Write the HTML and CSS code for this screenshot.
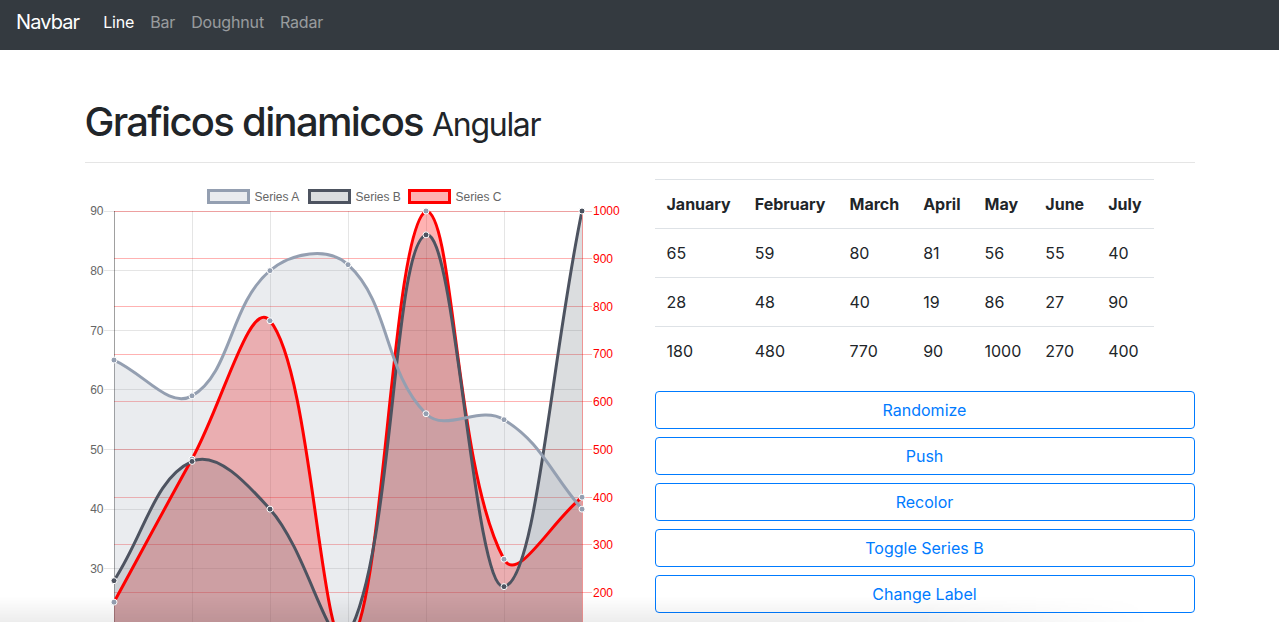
FILE: index.html
```html
<!DOCTYPE html>
<html lang="en">
<head>
<meta charset="utf-8">
<title>Graficos dinamicos</title>
<link rel="stylesheet" href="styles.css">
</head>
<body>
<nav class="navbar">
  <a class="navbar-brand" href="#">Navbar</a>
  <ul class="nav">
    <li><a class="nav-link active" href="#">Line</a></li>
    <li><a class="nav-link" href="#">Bar</a></li>
    <li><a class="nav-link" href="#">Doughnut</a></li>
    <li><a class="nav-link" href="#">Radar</a></li>
  </ul>
</nav>

<main class="container">
  <header class="page-header">
    <h1>Graficos dinamicos <small>Angular</small></h1>
  </header>

  <div class="row">
    <div class="col">
      <svg class="chart" id="line-chart" width="540" height="540" viewBox="0 0 540 540">
        <defs>
          <clipPath id="clip-area"><rect x="29" y="31" width="468" height="477"></rect></clipPath>
          <clipPath id="clip-line"><rect x="29" y="29.5" width="468" height="480"></rect></clipPath>
        </defs>
        <g id="chart-grid"></g>
        <g class="ticks-left">
          <text x="18.5" y="35.3">90</text>
          <text x="18.5" y="94.9">80</text>
          <text x="18.5" y="154.6">70</text>
          <text x="18.5" y="214.2">60</text>
          <text x="18.5" y="273.8">50</text>
          <text x="18.5" y="333.4">40</text>
          <text x="18.5" y="393.1">30</text>
          <text x="18.5" y="452.7">20</text>
          <text x="18.5" y="512.3">10</text>
        </g>
        <g class="ticks-right">
          <text x="508" y="35.3">1000</text>
          <text x="508" y="83">900</text>
          <text x="508" y="130.7">800</text>
          <text x="508" y="178.4">700</text>
          <text x="508" y="226.1">600</text>
          <text x="508" y="273.8">500</text>
          <text x="508" y="321.5">400</text>
          <text x="508" y="369.2">300</text>
          <text x="508" y="416.9">200</text>
          <text x="508" y="464.6">100</text>
          <text x="508" y="512.3">0</text>
        </g>
        <g class="ticks-bottom">
          <text x="29" y="532">January</text>
          <text x="107" y="532">February</text>
          <text x="185" y="532">March</text>
          <text x="263" y="532">April</text>
          <text x="341" y="532">May</text>
          <text x="419" y="532">June</text>
          <text x="497" y="532">July</text>
        </g>
        <g id="chart-fills"></g>
        <g id="chart-series"></g>
        <g class="legend">
          <rect class="legend-a" x="123.5" y="10.5" width="40" height="12"></rect>
          <text x="169.5" y="20.6">Series A</text>
          <rect class="legend-b" x="224.5" y="10.5" width="40" height="12"></rect>
          <text x="270.5" y="20.6">Series B</text>
          <rect class="legend-c" x="324.5" y="10.5" width="40" height="12"></rect>
          <text x="370.5" y="20.6">Series C</text>
        </g>
      </svg>
    </div>

    <div class="col">
      <table class="data-table">
        <tr>
          <th>January</th><th>February</th><th>March</th><th>April</th><th>May</th><th>June</th><th>July</th>
        </tr>
        <tr>
          <td>65</td><td>59</td><td>80</td><td>81</td><td>56</td><td>55</td><td>40</td>
        </tr>
        <tr>
          <td>28</td><td>48</td><td>40</td><td>19</td><td>86</td><td>27</td><td>90</td>
        </tr>
        <tr>
          <td>180</td><td>480</td><td>770</td><td>90</td><td>1000</td><td>270</td><td>400</td>
        </tr>
      </table>
      <div class="actions">
        <button class="btn" type="button">Randomize</button>
        <button class="btn" type="button">Push</button>
        <button class="btn" type="button">Recolor</button>
        <button class="btn" type="button">Toggle Series B</button>
        <button class="btn" type="button">Change Label</button>
      </div>
    </div>
  </div>
</main>

<div class="bottom-shade"></div>
<script src="script.js"></script>
</body>
</html>
```

FILE: styles.css
```css
* { box-sizing: border-box; }

html, body { margin: 0; }

body {
  font-family: "Inter", "Roboto", "Liberation Sans", sans-serif;
  font-size: 16px;
  line-height: 24px;
  color: #212529;
  background: #fff;
}

.navbar {
  display: flex;
  align-items: center;
  height: 50px;
  padding: 0 16px 6px;
  background: #343a40;
}

.navbar-brand {
  font-size: 20px;
  line-height: 30px;
  letter-spacing: -0.045em;
  color: #fff;
  text-decoration: none;
  margin-right: 16px;
}

.nav {
  display: flex;
  list-style: none;
  margin: 0;
  padding: 0;
}

.nav-link {
  display: block;
  padding: 0 8px;
  line-height: 24px;
  letter-spacing: -0.01em;
  color: rgba(255, 255, 255, 0.5);
  text-decoration: none;
}

.nav-link.active { color: #fff; }

.container {
  width: 1140px;
  margin: 0 auto;
  padding: 0 15px;
}

.page-header {
  margin: 48px 0 17px;
  padding-bottom: 16px;
  border-bottom: 1px solid rgba(0, 0, 0, 0.1);
}

.page-header h1 {
  margin: 0;
  font-size: 40px;
  line-height: 48px;
  font-weight: 500;
  letter-spacing: -0.042em;
}

.page-header small {
  font-size: 80%;
  font-weight: 400;
  line-height: 1;
  letter-spacing: -0.04em;
}

.row {
  display: flex;
  gap: 30px;
}

.col { flex: 0 0 540px; }

.chart { display: block; overflow: visible; }

.chart text {
  font-family: "Liberation Sans", Arial, sans-serif;
  font-size: 12px;
}

.ticks-left text { fill: #666; text-anchor: end; }
.ticks-right text { fill: #ff0000; }
.ticks-bottom text { fill: #666; text-anchor: middle; }
.legend text { fill: #666; }

.legend rect { stroke-width: 3; }
.legend-a { fill: rgba(148, 159, 177, 0.2); stroke: rgb(148, 159, 177); }
.legend-b { fill: rgba(77, 83, 96, 0.2); stroke: rgb(77, 83, 96); }
.legend-c { fill: rgba(255, 0, 0, 0.3); stroke: #ff0000; }

.grid-x { stroke: rgba(0, 0, 0, 0.1); stroke-width: 1; }
.grid-left { stroke: rgba(0, 0, 0, 0.1); stroke-width: 1; }
.grid-right { stroke: rgba(255, 0, 0, 0.3); stroke-width: 1; }
.axis-left { stroke: rgba(0, 0, 0, 0.3); stroke-width: 1; }
.axis-right { stroke: rgba(255, 0, 0, 0.35); stroke-width: 1; }

.series-line { fill: none; stroke-width: 3; stroke-linejoin: miter; }
.series-point { stroke: #fff; stroke-width: 1; }

.data-table {
  border-collapse: collapse;
  margin-top: -1px;
  margin-bottom: 16px;
}

.data-table th,
.data-table td {
  padding: 12px;
  border-top: 1px solid #dee2e6;
  text-align: left;
  vertical-align: top;
}

.data-table th { font-weight: 700; }

.btn {
  display: block;
  width: 100%;
  padding: 6px 12px;
  font: inherit;
  line-height: 24px;
  color: #007bff;
  background: transparent;
  border: 1px solid #007bff;
  border-radius: 4px;
  text-align: center;
}

.btn + .btn { margin-top: 8px; }

.bottom-shade {
  position: fixed;
  left: 0;
  right: 0;
  bottom: 0;
  height: 26px;
  pointer-events: none;
  background: linear-gradient(to bottom, rgba(0, 0, 0, 0), rgba(0, 0, 0, 0.07));
  -webkit-mask-image: linear-gradient(to right, #000 0%, #000 72%, transparent 90%);
  mask-image: linear-gradient(to right, #000 0%, #000 72%, transparent 90%);
}
```

FILE: script.js
```js
(function () {
  var NS = 'http://www.w3.org/2000/svg';
  var area = { left: 29, right: 497, top: 31, bottom: 508 };
  var step = (area.right - area.left) / 6;
  var tension = 0.4;

  function leftScale(v) { return area.top + (90 - v) * (area.bottom - area.top) / 80; }
  function rightScale(v) { return area.top + (1000 - v) * (area.bottom - area.top) / 1000; }
  function crisp(v) { return Math.floor(v) + 0.5; }
  function clamp(v, lo, hi) { return Math.max(lo, Math.min(hi, v)); }

  function el(tag, attrs, parent) {
    var node = document.createElementNS(NS, tag);
    Object.keys(attrs).forEach(function (k) { node.setAttribute(k, attrs[k]); });
    parent.appendChild(node);
    return node;
  }

  var grid = document.getElementById('chart-grid');
  var i, v, x, y;
  for (i = 0; i <= 6; i++) {
    x = crisp(area.left + i * step);
    el('line', { x1: x, x2: x, y1: area.top, y2: area.bottom + 10, 'class': 'grid-x' }, grid);
  }
  for (v = 90; v >= 10; v -= 10) {
    y = crisp(leftScale(v));
    el('line', { x1: area.left - 10, x2: area.right, y1: y, y2: y, 'class': 'grid-left' }, grid);
  }
  for (v = 1000; v >= 0; v -= 100) {
    y = crisp(rightScale(v));
    el('line', { x1: area.left, x2: area.right + 10, y1: y, y2: y, 'class': 'grid-right' }, grid);
  }
  el('line', { x1: 29.5, x2: 29.5, y1: area.top, y2: area.bottom, 'class': 'axis-left' }, grid);
  el('line', { x1: 497.5, x2: 497.5, y1: area.top, y2: area.bottom, 'class': 'axis-right' }, grid);

  var datasets = [
    { data: [65, 59, 80, 81, 56, 55, 40], scale: leftScale,
      fill: 'rgba(148,159,177,0.2)', line: 'rgb(148,159,177)', point: 'rgb(148,159,177)' },
    { data: [28, 48, 40, 19, 86, 27, 90], scale: leftScale,
      fill: 'rgba(77,83,96,0.2)', line: 'rgb(77,83,96)', point: 'rgb(77,83,96)' },
    { data: [180, 480, 770, 90, 1000, 270, 400], scale: rightScale,
      fill: 'rgba(255,0,0,0.3)', line: '#ff0000', point: 'rgb(148,159,177)' }
  ];

  function buildPoints(ds) {
    var pts = ds.data.map(function (val, idx) {
      return { x: area.left + idx * step, y: ds.scale(val) };
    });
    pts.forEach(function (p, idx) {
      var prev = pts[Math.max(idx - 1, 0)];
      var next = pts[Math.min(idx + 1, pts.length - 1)];
      var d01 = Math.sqrt(Math.pow(p.x - prev.x, 2) + Math.pow(p.y - prev.y, 2));
      var d12 = Math.sqrt(Math.pow(next.x - p.x, 2) + Math.pow(next.y - p.y, 2));
      var s01 = d01 / (d01 + d12);
      var s12 = d12 / (d01 + d12);
      if (isNaN(s01)) { s01 = 0; }
      if (isNaN(s12)) { s12 = 0; }
      var fa = tension * s01;
      var fb = tension * s12;
      p.px = clamp(p.x - fa * (next.x - prev.x), area.left, area.right);
      p.py = clamp(p.y - fa * (next.y - prev.y), area.top, area.bottom);
      p.nx = clamp(p.x + fb * (next.x - prev.x), area.left, area.right);
      p.ny = clamp(p.y + fb * (next.y - prev.y), area.top, area.bottom);
    });
    return pts;
  }

  function f(n) { return n.toFixed(2); }

  var fills = document.getElementById('chart-fills');
  var layer = document.getElementById('chart-series');
  for (var d = datasets.length - 1; d >= 0; d--) {
    var ds = datasets[d];
    var pts = buildPoints(ds);
    var path = 'M' + f(pts[0].x) + ' ' + f(pts[0].y);
    for (i = 1; i < pts.length; i++) {
      var a = pts[i - 1];
      var b = pts[i];
      path += ' C' + f(a.nx) + ' ' + f(a.ny) + ' ' + f(b.px) + ' ' + f(b.py) + ' ' + f(b.x) + ' ' + f(b.y);
    }
    var last = pts[pts.length - 1];
    var fillPath = path + ' L' + f(last.x) + ' ' + area.bottom + ' L' + f(pts[0].x) + ' ' + area.bottom + ' Z';
    el('path', { d: fillPath, fill: ds.fill, 'clip-path': 'url(#clip-area)' }, fills);
    el('path', { d: path, stroke: ds.line, 'class': 'series-line', 'clip-path': 'url(#clip-line)' }, layer);
    pts.forEach(function (p) {
      el('circle', { cx: f(p.x), cy: f(p.y), r: 3, fill: ds.point, 'class': 'series-point' }, layer);
    });
  }
})();
```
